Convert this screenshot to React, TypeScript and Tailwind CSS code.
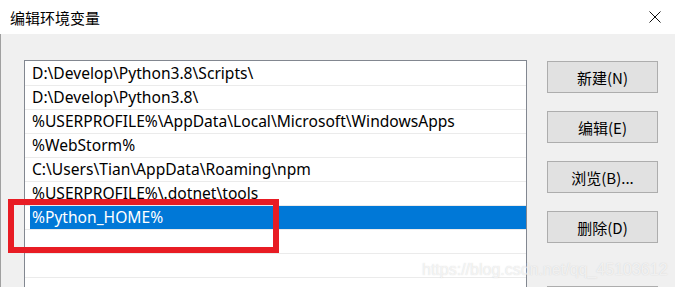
export default function App() {
  const paths = [
    "D:\\Develop\\Python3.8\\Scripts\\",
    "D:\\Develop\\Python3.8\\",
    "%USERPROFILE%\\AppData\\Local\\Microsoft\\WindowsApps",
    "%WebStorm%",
    "C:\\Users\\Tian\\AppData\\Roaming\\npm",
    "%USERPROFILE%\\.dotnet\\tools",
    "%Python_HOME%",
    "",
    "",
    "",
  ];
  const selected = 6;

  const buttons = ["新建(N)", "编辑(E)", "浏览(B)...", "删除(D)"];

  return (
    <div className="relative h-[287px] w-[675px] overflow-hidden bg-[#f0f0f0] font-['Noto_Sans','Noto_Sans_CJK_SC',sans-serif] text-black">
      {/* Title bar */}
      <div className="flex h-[34px] items-center justify-between bg-white pl-[10px] pr-[14px]">
        <span className="text-[15px] font-['Noto_Sans_CJK_SC',sans-serif] leading-none">编辑环境变量</span>
        <svg width="12" height="12" viewBox="0 0 12 12">
          <path d="M0.5 0.5 L11.5 11.5 M11.5 0.5 L0.5 11.5" stroke="#111" strokeWidth="1" />
        </svg>
      </div>

      {/* Body */}
      <div className="flex h-[253px] border-l border-[#a0a0a0]">
        {/* Path list */}
        <div className="ml-[23px] mt-[26px] h-[260px] w-[503px] shrink-0 border border-[#828790] bg-white pt-[1px]">
          {paths.map((p, i) => (
            <div key={i} className="h-[24px] border-b border-[#ebebeb] pl-[5px]">
              <div
                className={`h-[23px] pl-[2px] text-[15.6px] leading-[23px] whitespace-nowrap ${
                  i === selected ? "bg-[#0078d7] text-white" : ""
                }`}
              >
                {p}
              </div>
            </div>
          ))}
        </div>

        {/* Buttons */}
        <div className="ml-[20px] mt-[27px] flex flex-col">
          {buttons.map((b) => (
            <button
              key={b}
              className="mb-[18px] h-[32px] w-[111px] shrink-0 border border-[#adadad] bg-[#e1e1e1] text-[15px] font-['Noto_Sans_CJK_SC',sans-serif] leading-none"
            >
              {b}
            </button>
          ))}
          <div className="mt-[25px] h-[32px] w-[111px] shrink-0 border border-[#adadad] bg-[#e1e1e1]" />
        </div>
      </div>

      {/* Red highlight box */}
      <div className="absolute left-[8px] top-[199px] h-[54px] w-[271px] border-[6px] border-[#e81c24]" />

      {/* Watermark */}
      <div className="absolute left-[422px] top-[258px] text-[16px] font-['Liberation_Sans',sans-serif] text-[rgba(255,255,255,0.7)] [text-shadow:0_0_1px_rgba(170,170,170,0.5)]">
        https://blog.csdn.net/qq_45103612
      </div>
    </div>
  );
}
